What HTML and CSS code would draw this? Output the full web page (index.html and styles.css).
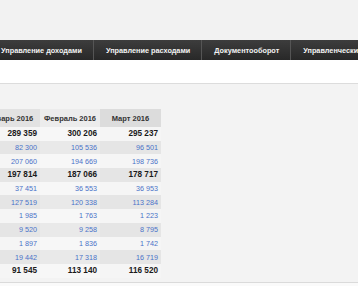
FILE: index.html
```html
<!DOCTYPE html>
<html lang="ru">
<head>
<meta charset="utf-8">
<link rel="stylesheet" href="styles.css">
</head>
<body>
<div class="top"></div>
<nav class="nav">
  <a class="nav-item">Управление доходами</a>
  <a class="nav-item">Управление расходами</a>
  <a class="nav-item">Документооборот</a>
  <a class="nav-item">Управленческий учёт</a>
</nav>
<div class="band"></div>
<main class="content">
  <table class="report">
    <thead>
      <tr><th class="c1">Январь 2016</th><th class="c2">Февраль 2016</th><th class="c3">Март 2016</th></tr>
    </thead>
    <tbody>
      <tr class="total"><td>289 359</td><td class="c2">300 206</td><td>295 237</td></tr>
      <tr class="alt"><td>82 300</td><td class="c2">105 536</td><td>96 501</td></tr>
      <tr><td>207 060</td><td class="c2">194 669</td><td>198 736</td></tr>
      <tr class="total alt"><td>197 814</td><td class="c2">187 066</td><td>178 717</td></tr>
      <tr><td>37 451</td><td class="c2">36 553</td><td>36 953</td></tr>
      <tr class="alt"><td>127 519</td><td class="c2">120 338</td><td>113 284</td></tr>
      <tr><td>1 985</td><td class="c2">1 763</td><td>1 223</td></tr>
      <tr class="alt"><td>9 520</td><td class="c2">9 258</td><td>8 795</td></tr>
      <tr><td>1 897</td><td class="c2">1 836</td><td>1 742</td></tr>
      <tr class="alt"><td>19 442</td><td class="c2">17 318</td><td>16 719</td></tr>
      <tr class="total"><td>91 545</td><td class="c2">113 140</td><td>116 520</td></tr>
    </tbody>
  </table>
</main>
<div class="footer"></div>
</body>
</html>
```
FILE: styles.css
```css
html, body {
  margin: 0;
  padding: 0;
  overflow: hidden;
  background: #f2f2f2;
  font-family: "Liberation Sans", Arial, sans-serif;
}
.top {
  height: 40px;
  background: #f2f2f2;
}
.nav {
  display: flex;
  height: 20px;
  background: linear-gradient(#3d3d3d, #282828);
  margin-left: -11px;
  white-space: nowrap;
}
.nav-item {
  display: flex;
  align-items: center;
  padding: 0 11px 0 12px;
  color: #f2f2f2;
  font-weight: bold;
  font-size: 7.3px;
  border-right: 1px solid #555;
  flex: none;
}
.band {
  height: 23px;
  background: #fff;
  border-bottom: 1px solid #dcdcdc;
}
.content {
  padding-top: 25px;
  height: 173px;
  background: #f3f3f3;
  border-bottom: 1px solid #dadada;
}
.report {
  border-collapse: collapse;
  margin-left: -20px;
  table-layout: fixed;
}
.report th {
  height: 18px;
  padding: 0;
  font-size: 7.5px;
  font-weight: bold;
  color: #333;
  text-align: center;
  width: 60px;
}
.report th.c1 { background: #e2e2e2; }
.report th.c2 { background: #ececec; }
.report th.c3 { background: #dcdcdc; width: 61px; }
.report td {
  height: 13.7px;
  padding: 0 3px 0 0;
  text-align: right;
  font-size: 7.2px;
  color: #4a72c8;
  background: #f5f5f5;
}
.report tr.alt td { background: #e5e5e5; }
.report tr.alt td.c2 { background: #e9e9e9; }
.report td.c2 { background: #f7f7f7; }
.report tr.total td {
  font-weight: bold;
  font-size: 8.2px;
  color: #1a1a1a;
}
.footer {
  height: 40px;
  background: #fafafa;
}
```
